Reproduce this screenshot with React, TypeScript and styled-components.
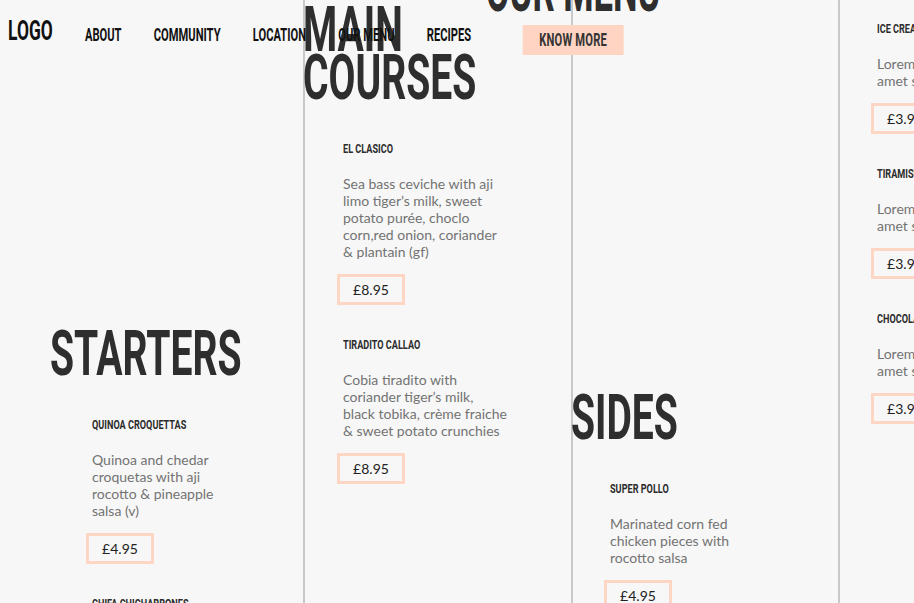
import React from 'react';
import styled, { createGlobalStyle } from 'styled-components';

const CONDENSED = `"Roboto", "Liberation Sans", sans-serif`;
const BODY = `"Lato", "Open Sans", "Liberation Sans", sans-serif`;
const SQUEEZE = 0.62;

const GlobalStyle = createGlobalStyle`
  html, body { margin: 0; padding: 0; background: #f7f7f7; }
  body { font-family: ${BODY}; }
`;

const Page = styled.div`
  position: relative;
  width: 914px;
  height: 603px;
  overflow: hidden;
  background: #f7f7f7;
`;

const Header = styled.header`
  position: absolute;
  top: 0;
  left: 0;
  z-index: 2;
  display: flex;
  align-items: flex-start;
  transform: scaleX(0.62);
  transform-origin: 0 0;
  width: 1474px;
`;

const Logo = styled.div`
  margin: 17px 0 0 13px;
  font-family: ${CONDENSED};
  font-weight: 700;
  font-size: 28px;
  line-height: 28px;
  color: #111;
`;

const NavList = styled.nav`
  display: flex;
  gap: 52px;
  margin: 26px 0 0 52px;
`;

const NavLink = styled.a`
  font-family: ${CONDENSED};
  font-weight: 700;
  font-size: 18px;
  line-height: 18px;
  color: #111;
  text-decoration: none;
  white-space: nowrap;
`;

const KnowMore = styled.button`
  margin: 25px 0 0 83px;
  width: 163px;
  height: 30px;
  border: none;
  padding: 0 0 2px;
  background: #ffd4c2;
  font-family: ${CONDENSED};
  font-weight: 700;
  font-size: 18px;
  letter-spacing: 0.3px;
  color: #333;
  display: flex;
  align-items: center;
  justify-content: center;
`;

const MenuTitle = styled.h1`
  position: absolute;
  z-index: 1;
  top: -34px;
  left: 573px;
  margin: 0;
  font-family: ${CONDENSED};
  font-weight: 700;
  font-size: 63px;
  line-height: 48px;
  color: #2e2e2e;
  white-space: nowrap;
  transform: translateX(-50%) scaleX(0.55);
  transform-origin: center top;
`;

const Columns = styled.div`
  display: grid;
  grid-template-columns: 303px 268px 267px 1fr;
  height: 100%;
`;

const Column = styled.section<{ $top: number; $divider: boolean }>`
  min-width: 0;
  padding-top: ${(p) => p.$top}px;
  border-left: ${(p) => (p.$divider ? '2px solid #c9c9c9' : 'none')};
`;

const Heading = styled.h2<{ $indent: number }>`
  margin: 0 0 40px ${(p) => p.$indent}px;
  font-family: ${CONDENSED};
  font-weight: 700;
  font-size: 63px;
  line-height: 48px;
  color: #2e2e2e;
  white-space: nowrap;
  transform: scaleX(${SQUEEZE});
  transform-origin: left top;
`;

const ItemList = styled.div<{ $indent: number }>`
  display: flex;
  flex-direction: column;
  margin-left: ${(p) => p.$indent}px;
`;

const Item = styled.article`
  display: flex;
  flex-direction: column;
  align-items: flex-start;
  margin-bottom: 33px;
`;

const ItemName = styled.h3`
  margin: 0 0 0 6px;
  font-family: ${CONDENSED};
  font-weight: 700;
  font-size: 12px;
  line-height: 14px;
  color: #2b2b2b;
  white-space: nowrap;
  transform: scaleX(0.76);
  transform-origin: left top;
`;

const Description = styled.p`
  margin: 19px 0 14px;
  padding-left: 6px;
  font-family: ${BODY};
  font-size: 14px;
  line-height: 17px;
  color: #737373;
  white-space: nowrap;
`;

const Price = styled.div`
  box-sizing: border-box;
  width: 68px;
  height: 31px;
  border: 3px solid #ffd6c4;
  display: flex;
  align-items: center;
  justify-content: center;
  font-family: ${BODY};
  font-size: 14px;
  color: #222;
`;

type Dish = { name: string; lines: string[]; price: string };

type Section = {
  heading?: string[];
  top: number;
  headingIndent: number;
  itemIndent: number;
  divider: boolean;
  dishes: Dish[];
};

const sections: Section[] = [
  {
    heading: ['STARTERS'],
    top: 330,
    headingIndent: 50,
    itemIndent: 86,
    divider: false,
    dishes: [
      {
        name: 'QUINOA CROQUETTAS',
        lines: ['Quinoa and chedar', 'croquetas with aji', 'rocotto & pineapple', 'salsa (v)'],
        price: '£4.95',
      },
      {
        name: 'CHIFA CHICHARRONES',
        lines: ['Crispy pork belly with', 'sweet chilli sauce'],
        price: '£4.95',
      },
    ],
  },
  {
    heading: ['MAIN', 'COURSES'],
    top: 6,
    headingIndent: -2,
    itemIndent: 32,
    divider: true,
    dishes: [
      {
        name: 'EL CLASICO',
        lines: [
          'Sea bass ceviche with aji',
          'limo tiger’s milk, sweet',
          'potato purée, choclo',
          'corn,red onion, coriander',
          '& plantain (gf)',
        ],
        price: '£8.95',
      },
      {
        name: 'TIRADITO CALLAO',
        lines: [
          'Cobia tiradito with',
          'coriander tiger’s milk,',
          'black tobika, crème fraiche',
          '& sweet potato crunchies',
        ],
        price: '£8.95',
      },
    ],
  },
  {
    heading: ['SIDES'],
    top: 394,
    headingIndent: -2,
    itemIndent: 31,
    divider: true,
    dishes: [
      {
        name: 'SUPER POLLO',
        lines: ['Marinated corn fed', 'chicken pieces with', 'rocotto salsa'],
        price: '£4.95',
      },
    ],
  },
  {
    top: 22,
    headingIndent: -2,
    itemIndent: 31,
    divider: true,
    dishes: [
      { name: 'ICE CREAM', lines: ['Lorem ipsum dolor sit', 'amet sed do eiusmod'], price: '£3.95' },
      { name: 'TIRAMISU', lines: ['Lorem ipsum dolor sit', 'amet sed do eiusmod'], price: '£3.95' },
      { name: 'CHOCOLATE FONDANT', lines: ['Lorem ipsum dolor sit', 'amet sed do eiusmod'], price: '£3.95' },
    ],
  },
];

const navItems = ['ABOUT', 'COMMUNITY', 'LOCATION', 'OUR MENU', 'RECIPES'];

export default function App() {
  return (
    <>
      <GlobalStyle />
      <Page>
        <Header>
          <Logo>LOGO</Logo>
          <NavList>
            {navItems.map((n) => (
              <NavLink key={n} href="#">
                {n}
              </NavLink>
            ))}
          </NavList>
          <KnowMore>KNOW MORE</KnowMore>
        </Header>
        <MenuTitle>OUR MENU</MenuTitle>
        <Columns>
          {sections.map((s, i) => (
            <Column key={i} $top={s.top} $divider={s.divider}>
              {s.heading && (
                <Heading $indent={s.headingIndent}>
                  {s.heading.map((l, j) => (
                    <React.Fragment key={j}>
                      {j > 0 && <br />}
                      {l}
                    </React.Fragment>
                  ))}
                </Heading>
              )}
              <ItemList $indent={s.itemIndent}>
                {s.dishes.map((d) => (
                  <Item key={d.name}>
                    <ItemName>{d.name}</ItemName>
                    <Description>
                      {d.lines.map((l, j) => (
                        <React.Fragment key={j}>
                          {j > 0 && <br />}
                          {l}
                        </React.Fragment>
                      ))}
                    </Description>
                    <Price>{d.price}</Price>
                  </Item>
                ))}
              </ItemList>
            </Column>
          ))}
        </Columns>
      </Page>
    </>
  );
}
